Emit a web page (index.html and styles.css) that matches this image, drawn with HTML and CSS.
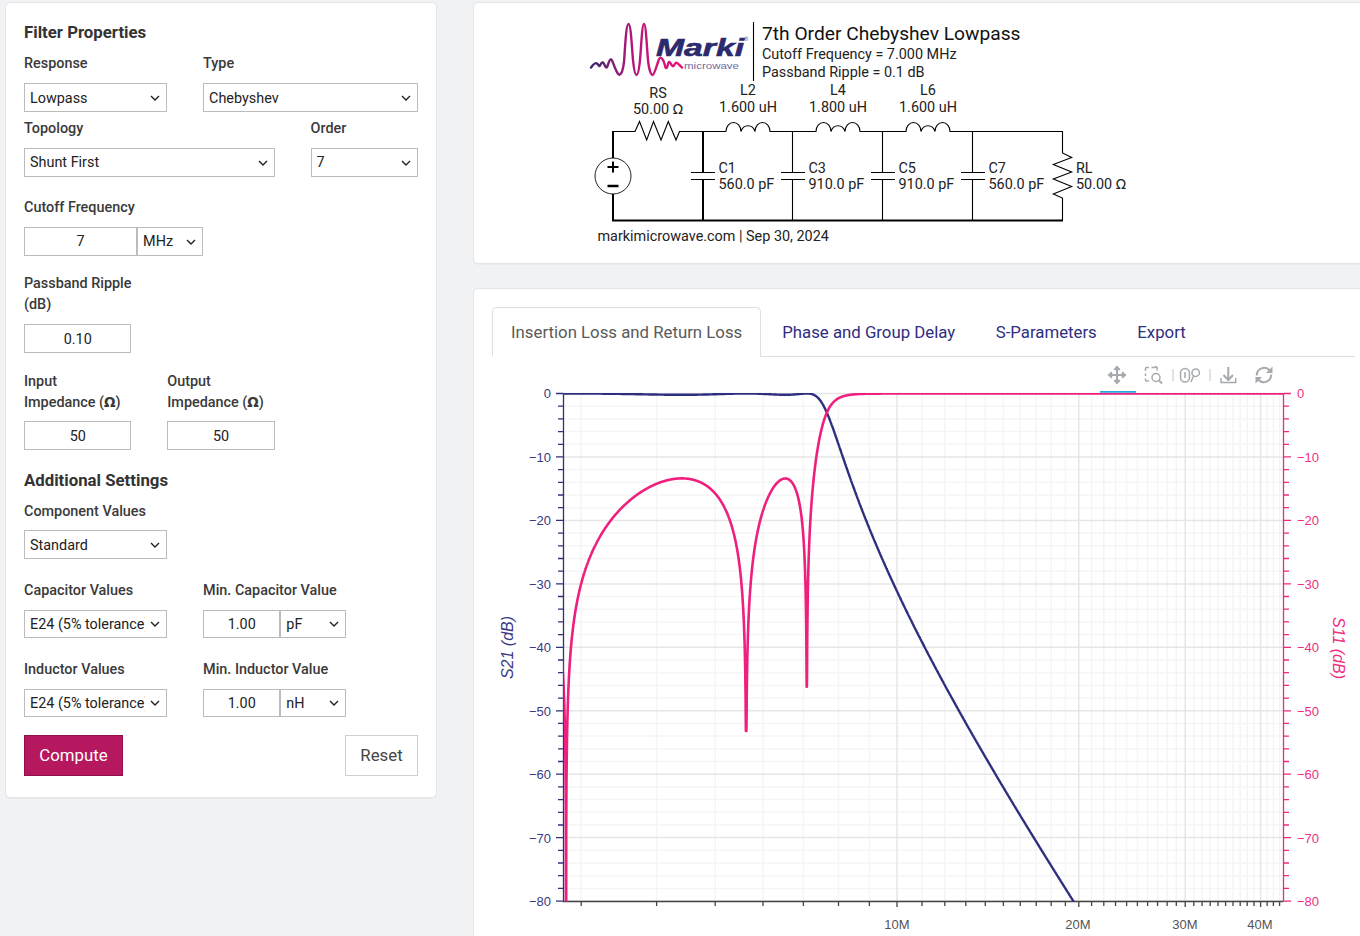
FILE: index.html
```html
<!DOCTYPE html>
<html lang="en">
<head>
<meta charset="utf-8">
<title>Filter Designer</title>
<link rel="stylesheet" href="styles.css">
</head>
<body>
<div class="page">
  <form class="card panel">
    <h2 class="head">Filter Properties</h2>
    <div class="row gap-s">
      <div class="field c1-4"><label>Response</label><select class="ctl nudge"><option>Lowpass</option></select></div>
      <div class="field c6-6"><label>Type</label><select class="ctl nudge"><option>Chebyshev</option></select></div>
    </div>
    <div class="row gap-xs">
      <div class="field c1-7"><label>Topology</label><select class="ctl"><option>Shunt First</option></select></div>
      <div class="field c9-3"><label>Order</label><select class="ctl"><option>7</option></select></div>
    </div>
    <div class="row gap-l">
      <div class="field c1-5"><label>Cutoff Frequency</label>
        <div class="group"><input class="ctl num" value="7"><select class="ctl unit"><option>MHz</option></select></div>
      </div>
    </div>
    <div class="row gap-m">
      <div class="field c1-3 lab-tight"><label>Passband&nbsp;Ripple (dB)</label><input class="ctl num nudge" value="0.10"></div>
    </div>
    <div class="row gap-m">
      <div class="field c1-3 lab-low"><label>Input Impedance&nbsp;(<span class="ohm">Ω</span>)</label><input class="ctl num nudge" value="50"></div>
      <div class="field c5-3 lab-low"><label>Output Impedance&nbsp;(<span class="ohm">Ω</span>)</label><input class="ctl num nudge" value="50"></div>
    </div>
    <h2 class="head sub">Additional Settings</h2>
    <div class="row gap-h">
      <div class="field c1-4 lab-low"><label>Component Values</label><select class="ctl nudge"><option>Standard</option></select></div>
    </div>
    <div class="row gap-l2">
      <div class="field c1-4"><label>Capacitor Values</label><select class="ctl short"><option>E24 (5% tolerance)</option></select></div>
      <div class="field c6-4"><label>Min. Capacitor Value</label>
        <div class="group"><input class="ctl short num" value="1.00"><select class="ctl short unit"><option>pF</option></select></div>
      </div>
    </div>
    <div class="row gap-l2">
      <div class="field c1-4"><label>Inductor Values</label><select class="ctl short"><option>E24 (5% tolerance)</option></select></div>
      <div class="field c6-4"><label>Min. Inductor Value</label>
        <div class="group"><input class="ctl short num" value="1.00"><select class="ctl short unit"><option>nH</option></select></div>
      </div>
    </div>
    <div class="actions">
      <button type="button" class="btn primary">Compute</button>
      <button type="button" class="btn plain">Reset</button>
    </div>
  </form>

  <main class="right">
    <section class="card schematic">
      <svg class="schem" width="899" height="260" viewBox="474 3 899 260" xmlns="http://www.w3.org/2000/svg">
        <defs>
          <linearGradient id="wave" gradientUnits="userSpaceOnUse" x1="591" y1="0" x2="682" y2="0">
            <stop offset="0" stop-color="#3a2a6e"/>
            <stop offset="0.4" stop-color="#a81a78"/>
            <stop offset="1" stop-color="#ee107a"/>
          </linearGradient>
        </defs>
        <path class="wave" d="M591 67.5C593 65 595 62 597 63.5S599 67 600 65.5 602 61 603.5 63 606 70 607.5 66 609.500 59 611 59.500 614 66 615.500 69 618 75.500 620 74.500 623 70 624 62C625 50 626 24 628.500 24S632 50 633 60 635 75 636.500 75 639 70 640 60 642 24 644 24 647 50 648 60 651 75 652.500 75 656 68 658 62 661 57 663 60 665 69 666.500 68 668 61 669.500 62 672 67 673.500 66 675 62 677 63 680 66 682 67.500"/>
        <text class="logo-name" x="656" y="56" textLength="88" lengthAdjust="spacingAndGlyphs">Marki</text>
        <text class="logo-tm" x="744.500" y="41">®</text>
        <text class="logo-sub" x="684" y="68.500" textLength="55" lengthAdjust="spacingAndGlyphs">microwave</text>
        <path class="wire" d="M753.500 22V81"/>
        <text class="t-title" x="762" y="40">7th Order Chebyshev Lowpass</text>
        <text class="t-lab" x="762" y="59">Cutoff Frequency = 7.000 MHz</text>
        <text class="t-lab" x="762" y="77">Passband Ripple = 0.1 dB</text>

        <text class="t-lab mid" x="658" y="98">RS</text><text class="t-lab mid" x="658" y="114">50.00 <tspan class="ohm-thin">Ω</tspan></text>
        <text class="t-lab mid" x="748" y="95">L2</text><text class="t-lab mid" x="748" y="112">1.600 uH</text>
        <text class="t-lab mid" x="838" y="95">L4</text><text class="t-lab mid" x="838" y="112">1.800 uH</text>
        <text class="t-lab mid" x="928" y="95">L6</text><text class="t-lab mid" x="928" y="112">1.600 uH</text>

        <path class="wire" d="M613 131.500H635L639.500 121.500 646.700 140 653.500 121.500 661 140 668.300 121.500 676 140 679.500 131.500H726"/>
        <path class="wire" d="M726 131.500A7.500 9 0 0 1 741 131.500A7.500 9 0 0 1 755 131.500A7.500 9 0 0 1 770 131.500H816A7.500 9 0 0 1 831 131.500A7.500 9 0 0 1 845 131.500A7.500 9 0 0 1 860 131.500H906A7.500 9 0 0 1 921 131.500A7.500 9 0 0 1 935 131.500A7.500 9 0 0 1 950 131.500H1062.500V153L1071.700 157.500 1053.300 164.500 1071.700 172 1053.300 179 1071.700 186.500 1053.300 194 1062.500 198V220"/>
        <circle class="wire w1" cx="613" cy="176" r="18"/>
        <path class="wire w2" d="M613 131V158M613 194V220.500H1063M607.500 167H618.500M613 161.500V172.500"/>
        <path class="wire w3" d="M607.500 186H618.500"/>
        <path class="wire w2" d="M703 131.500V172.500M703 179.500V220.500"/>
        <path class="wire" d="M691 172.500H715M691 179.500H715"/>
        <path class="wire" d="M792.500 131.500V172.500M792.500 179.500V220.500M781 172.500H805M781 179.500H805"/>
        <path class="wire" d="M882.500 131.500V172.500M882.500 179.500V220.500M871 172.500H895M871 179.500H895"/>
        <path class="wire" d="M972.500 131.500V172.500M972.500 179.500V220.500M961 172.500H985M961 179.500H985"/>

        <text class="t-lab" x="718.500" y="173">C1</text><text class="t-lab" x="718.500" y="189">560.0 pF</text>
        <text class="t-lab" x="808.500" y="173">C3</text><text class="t-lab" x="808.500" y="189">910.0 pF</text>
        <text class="t-lab" x="898.500" y="173">C5</text><text class="t-lab" x="898.500" y="189">910.0 pF</text>
        <text class="t-lab" x="988.500" y="173">C7</text><text class="t-lab" x="988.500" y="189">560.0 pF</text>
        <text class="t-lab" x="1076" y="173">RL</text><text class="t-lab" x="1076" y="189">50.00 <tspan class="ohm-thin">Ω</tspan></text>
        <text class="t-lab" x="597.500" y="241">markimicrowave.com | Sep 30, 2024</text>
      </svg>
    </section>

    <section class="card results">
      <nav class="tabs">
        <a class="tab active">Insertion Loss and Return Loss</a>
        <a class="tab">Phase and Group Delay</a>
        <a class="tab">S-Parameters</a>
        <a class="tab">Export</a>
      </nav>
      <svg class="chart" width="899" height="579" viewBox="474 357 899 579" xmlns="http://www.w3.org/2000/svg">
        <defs><clipPath id="plot"><rect x="563.500" y="393" width="720" height="508.500"/></clipPath></defs>

        <g class="tool">
          <path d="M1117 367V383M1109 375H1125M1114.300 370 1117 367 1119.700 370M1114.300 380 1117 383 1119.700 380M1112 372.300 1109 375 1112 377.700M1122 372.300 1125 375 1122 377.700"/>
          <path class="thin" d="M1145.500 371V368.500A1 1 0 0 1 1146.500 367.500H1149M1151.500 367.500H1154.500A1 1 0 0 1 1157 369V370.500M1145.500 373.500V376M1145.500 378.500V380A1 1 0 0 0 1146.500 381H1149"/>
          <circle class="thin" cx="1156" cy="377.500" r="4"/>
          <path d="M1159 380.500 1162 383.500"/>
          <path class="sep" d="M1173 369V381M1210 369V381"/>
          <rect class="thin" x="1180.500" y="368.500" width="9" height="13.500" rx="4.500"/>
          <path class="thin" d="M1185 372V378"/>
          <circle class="thin" cx="1195.700" cy="372.700" r="3.700"/>
          <path class="thin" d="M1193.500 376 1191 382"/>
          <path d="M1228.300 367V380M1223.500 375 1228.300 380 1233 375"/>
          <path class="thin" d="M1221 378V382.500H1235.700V378"/>
          <path d="M1256.800 375.500A7.400 7.400 0 0 1 1269.800 370.500M1271.200 374.500A7.400 7.400 0 0 1 1258.200 379.500"/>
          <path class="fill" d="M1272.500 366.500V373H1266ZM1255.500 383.500V377H1262Z"/>
        </g>
        <rect class="active-tool" x="1100" y="391" width="36" height="2"/>

        <path id="gridMinor" class="grid-minor"/>
        <path id="gridMajor" class="grid-major"/>
        <path id="tickLeft" class="axis-left"/>
        <path id="tickRight" class="axis-right"/>
        <path id="tickBottom" class="axis-bottom"/>

        <g clip-path="url(#plot)">
          <path id="s21" class="trace trace-s21"/>
          <path id="s11" class="trace trace-s11"/>
        </g>

        <g class="lab-left">
          <text x="551" y="398">0</text><text x="551" y="462">−10</text><text x="551" y="525">−20</text>
          <text x="551" y="589">−30</text><text x="551" y="652">−40</text><text x="551" y="716">−50</text>
          <text x="551" y="779">−60</text><text x="551" y="843">−70</text><text x="551" y="906">−80</text>
        </g>
        <g class="lab-right">
          <text x="1297" y="398">0</text><text x="1297" y="462">−10</text><text x="1297" y="525">−20</text>
          <text x="1297" y="589">−30</text><text x="1297" y="652">−40</text><text x="1297" y="716">−50</text>
          <text x="1297" y="779">−60</text><text x="1297" y="843">−70</text><text x="1297" y="906">−80</text>
        </g>
        <g class="lab-bottom">
          <text x="897" y="929">10M</text><text x="1078" y="929">20M</text>
          <text x="1185" y="929">30M</text><text x="1260" y="929">40M</text>
        </g>
        <text class="title-left" transform="translate(513 647.500) rotate(-90)">S21 (dB)</text>
        <text class="title-right" transform="translate(1332.500 648) rotate(90)">S11 (dB)</text>
      </svg>
    </section>
  </main>
</div>
<script src="chart.js"></script>
</body>
</html>
```
FILE: styles.css
```css
* { box-sizing: border-box; }
html, body { margin: 0; height: 936px; overflow: hidden; }
body { background: #f1f2f4; font-family: Roboto, "Liberation Sans", sans-serif; color: #333; }

.page { display: flex; align-items: flex-start; gap: 36px; padding: 2px 0 0 5px; width: 1360px; height: 936px; overflow: hidden; }
.card { background: #fff; border: 1px solid #e3e5e8; border-radius: 5px; box-shadow: 0 1px 1px rgba(0,0,0,.03); }

.panel { flex: none; width: 432px; height: 796px; padding: 19px 18px 0 18px; }
.head { margin: 0; font-size: 16.8px; line-height: 20px; font-weight: 700; color: #333; }
.head.sub { margin-top: 20px; }

.row { display: grid; grid-template-columns: repeat(11, 1fr); }
.gap-xs { margin-top: 6px; }
.gap-s { margin-top: 11px; }
.gap-m { margin-top: 17px; }
.gap-l { margin-top: 20px; }
.gap-l2 { margin-top: 21px; }
.gap-h { margin-top: 10px; }

.c1-3 { grid-column: 1 / span 3; }
.c1-4 { grid-column: 1 / span 4; }
.c1-5 { grid-column: 1 / span 5; }
.c1-7 { grid-column: 1 / span 7; }
.c5-3 { grid-column: 5 / span 3; }
.c6-4 { grid-column: 6 / span 4; }
.c6-6 { grid-column: 6 / span 6; }
.c9-3 { grid-column: 9 / span 3; }

.field { display: flex; flex-direction: column; min-width: 0; }
.field label { display: block; margin-bottom: 9px; font-size: 14.4px; line-height: 21px; font-weight: 500; color: #3a3a3a; }
.lab-low label { margin-top: 1px; margin-bottom: 8px; }
.lab-tight label { margin-top: 1px; margin-bottom: 9px; line-height: 20.5px; }
.ohm { font-family: "DejaVu Sans", sans-serif; font-weight: 700; font-size: 13.5px; }

.ctl { display: block; width: 100%; height: 29px; margin: 0; border: 1px solid #bcbcbc; border-radius: 0; background-color: #fff; font: 14.4px Roboto, sans-serif; color: #222; outline: none; }
select.ctl { appearance: none; padding: 0 21px 0 5px; background: #fff url("data:image/svg+xml,%3Csvg xmlns='http://www.w3.org/2000/svg' width='10' height='6'%3E%3Cpath d='M1 1l4 4 4-4' fill='none' stroke='%23222' stroke-width='1.4'/%3E%3C/svg%3E") no-repeat right 6px center; }
.ctl.short { height: 28px; }
.num { text-align: center; padding: 0 7px; }
.num.nudge { padding-top: 2px; }
select.ctl.nudge { padding-top: 2px; }
.group { display: flex; }
.group .num { flex: 1 1 0; min-width: 0; }
.group .unit { flex: none; width: 66px; }

.actions { display: flex; justify-content: space-between; margin-top: 18px; }
.btn { height: 41px; border-radius: 0; font: 16.8px Roboto, sans-serif; padding: 0 0 2px; }
.primary { width: 99px; background: #b5185e; border: 1px solid #8f1049; color: #fff; }
.plain { width: 73px; background: #fff; border: 1px solid #cfcfcf; color: #444; }

.right { flex: none; width: 901px; display: flex; flex-direction: column; gap: 24px; }
.schematic { height: 262px; }
.schem, .chart { display: block; }
.results { height: 700px; padding-top: 18px; }

.tabs { display: flex; margin: 0 18px; height: 50px; border-bottom: 1px solid #dcdfe3; }
.tab { display: block; height: 50px; margin-right: .5px; padding: 0 19px; border: 1px solid transparent; border-radius: 5px 5px 0 0; font-size: 16.8px; line-height: 49px; color: #2e2d7f; }
.tab.active { margin-right: 1px; padding: 0 18px; border-color: #dcdfe3 #dcdfe3 #fff; background: #fff; color: #5a5a5a; }

.wave { fill: none; stroke: url(#wave); stroke-width: 2.4; stroke-linejoin: round; stroke-linecap: round; }
.logo-name { font: italic 700 24px "Liberation Sans", sans-serif; fill: #2c2a6e; stroke: #2c2a6e; stroke-width: .6; }
.logo-tm { font: 5px "Liberation Sans", sans-serif; fill: #2c2a6e; }
.logo-sub { font: 8.5px "Liberation Sans", sans-serif; fill: #6d6a9e; }
.wire { fill: none; stroke: #000; stroke-width: 1.1; }
.w1 { stroke-width: 1; stroke: #222; }
.w2 { stroke-width: 2; }
.w3 { stroke-width: 2.5; }
.t-title { font: 19.2px Roboto, sans-serif; fill: #111; }
.t-lab { font: 14.4px Roboto, sans-serif; fill: #222; }
.ohm-thin { font-family: "DejaVu Sans", sans-serif; font-size: 13.5px; }
.mid { text-anchor: middle; }

.tool path, .tool circle, .tool rect { fill: none; stroke: #a6aaae; stroke-width: 2; }
.tool .thin { stroke-width: 1.5; }
.tool .sep { stroke: #c4c6c9; stroke-width: 1; }
.tool .fill { fill: #a6aaae; stroke: none; }
.active-tool { fill: #26a7de; }

.grid-minor { fill: none; stroke: #f5f5f5; stroke-width: 1.5; }
.grid-major { fill: none; stroke: #e6e6e6; stroke-width: 1.5; }
.axis-left { fill: none; stroke: #2f2f7c; stroke-width: 1.3; }
.axis-right { fill: none; stroke: #ec2a7f; stroke-width: 1.3; }
.axis-bottom { fill: none; stroke: #444; stroke-width: 1.3; }
.trace { fill: none; stroke-linejoin: round; }
.trace-s21 { stroke: #2e2e7e; stroke-width: 2.4; }
.trace-s11 { stroke: #ee1f7d; stroke-width: 2.6; }

.lab-left text, .lab-right text, .lab-bottom text, .title-left, .title-right { font-family: "Liberation Sans", sans-serif; }
.lab-left text { font-size: 13px; fill: #3b3a85; text-anchor: end; }
.lab-right text { font-size: 13px; fill: #ee2f82; }
.lab-bottom text { font-size: 13px; fill: #555; text-anchor: middle; }
.title-left { font-size: 16px; font-style: italic; fill: #3b3a85; text-anchor: middle; }
.title-right { font-size: 16px; font-style: italic; fill: #ee2f82; text-anchor: middle; }
```
FILE: chart.js
```js
// Response of the ladder drawn in the schematic, computed from its component values.
(function () {
  var Z0 = 50;
  var ladder = [
    ['C', 560e-12], ['L', 1.6e-6], ['C', 910e-12], ['L', 1.8e-6],
    ['C', 910e-12], ['L', 1.6e-6], ['C', 560e-12]
  ];
  var X0 = 897, PX_PER_DECADE = 604, Y0 = 393.5, PX_PER_DB = 6.345;
  var LEFT = 563.5, RIGHT = 1283.5, BOTTOM = 901;

  function xOf(f) { return X0 + PX_PER_DECADE * Math.log10(f / 10e6); }
  function yOf(db) { return Y0 - PX_PER_DB * db; }

  function sampled(f, db) {
    if (f > 5e6 && f < 6.2e6) return Math.max(db, -53.2);
    if (f > 6.5e6 && f < 7.6e6) return Math.max(db, -46.2);
    if (f < 3e6 && db < -70) return -100;
    return db;
  }

  function response(f) {
    var w = 2 * Math.PI * f;
    // ABCD of a lossless ladder: A, D real; B, C imaginary.
    var A = 1, B = 0, C = 0, D = 1;
    ladder.forEach(function (el) {
      var a2, b2, c2, d2;
      if (el[0] === 'C') {
        var y = w * el[1];
        a2 = A - B * y; b2 = B; c2 = C + D * y; d2 = D;
      } else {
        var z = w * el[1];
        a2 = A; b2 = B + A * z; c2 = C; d2 = D - C * z;
      }
      A = a2; B = b2; C = c2; D = d2;
    });
    var re = A + D, im = B / Z0 + C * Z0;
    var den = re * re + im * im;
    var nRe = A - D, nIm = B / Z0 - C * Z0;
    return {
      s21: 10 * Math.log10(4 / den),
      s11: sampled(f, 10 * Math.log10(Math.max((nRe * nRe + nIm * nIm) / den, 1e-14)))
    };
  }

  var d21 = '', d11 = '', n = 6000, fLo = 2.6e6, fHi = 46e6;
  for (var i = 0; i <= n; i++) {
    var f = fLo * Math.pow(fHi / fLo, i / n);
    var r = response(f);
    var x = xOf(f).toFixed(2);
    d21 += (i ? 'L' : 'M') + x + ' ' + yOf(r.s21).toFixed(2);
    d11 += (i ? 'L' : 'M') + x + ' ' + yOf(r.s11).toFixed(2);
  }
  document.getElementById('s21').setAttribute('d', d21);
  document.getElementById('s11').setAttribute('d', d11);

  var gMin = '', gMaj = '', tl = 'M563.5 393.5V901', tr = 'M1283.5 393.5V901', tb = 'M563 901.5H1283.5';
  for (var db = 0; db >= -80; db -= 2) {
    var y = yOf(db).toFixed(1), major = db % 10 === 0;
    if (major) gMaj += 'M' + LEFT + ' ' + y + 'H' + RIGHT;
    else gMin += 'M' + LEFT + ' ' + y + 'H' + RIGHT;
    tl += 'M' + (major ? 556 : 558) + ' ' + y + 'H563.5';
    tr += 'M1283.5 ' + y + 'H' + (major ? 1291 : 1289);
  }
  for (var mhz = 3; mhz <= 43; mhz++) {
    var fx = xOf(mhz * 1e6).toFixed(1), maj = mhz >= 10 && mhz % 10 === 0;
    if (maj) gMaj += 'M' + fx + ' 393.5V' + BOTTOM;
    else gMin += 'M' + fx + ' 393.5V' + BOTTOM;
    tb += 'M' + fx + ' 901.5V' + (maj ? 907 : 906);
  }
  document.getElementById('gridMinor').setAttribute('d', gMin);
  document.getElementById('gridMajor').setAttribute('d', gMaj);
  document.getElementById('tickLeft').setAttribute('d', tl);
  document.getElementById('tickRight').setAttribute('d', tr);
  document.getElementById('tickBottom').setAttribute('d', tb);
})();
```
